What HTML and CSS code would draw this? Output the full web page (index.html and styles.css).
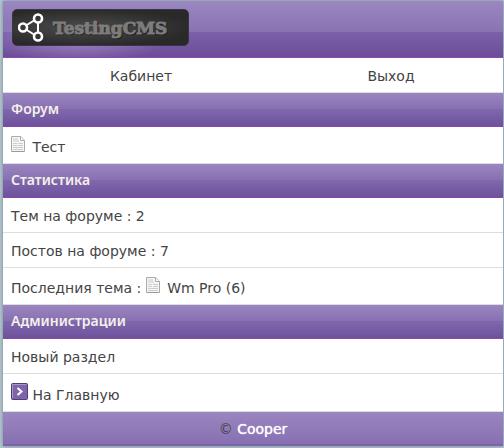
FILE: index.html
```
<!DOCTYPE html>
<html lang="ru">
<head>
  <meta charset="UTF-8">
  <meta name="viewport" content="width=device-width, initial-scale=1.0">
  <title>TestingCMS</title>
  <link rel="stylesheet" href="styles.css">
</head>
<body>
  <svg class="symbols" aria-hidden="true">
    <symbol id="doc" viewBox="0 0 14 16">
      <path d="M.5.5h9.2l3.8 3.8v11.2H.5z" fill="#f6f6f6" stroke="#aaa"/>
      <path d="M9.5.8v3.7h3.8" fill="#fff" stroke="#aaa"/>
      <path d="M2 3h5M2 5h6M2 7.5h4M7 7.5h5M2 9.5h4M7 9.5h5M2 11.5h10M2 13.5h10" stroke="#ccc"/>
      <path d="M1 15.5h12" stroke="#999"/>
    </symbol>
  </svg>

  <div class="page">
    <header class="header">
      <a class="logo" href="#">
        <svg class="logo-icon" viewBox="0 0 28 30" aria-hidden="true">
          <path d="M8 12.5l8-5M8 16.5l8 5M20 10v9" fill="none" stroke="#fff" stroke-width="2"/>
          <g fill="none" stroke="#fff" stroke-width="2.6">
            <circle cx="5" cy="14.5" r="4"/>
            <circle cx="20" cy="5.5" r="4"/>
            <circle cx="20" cy="23.5" r="4"/>
          </g>
        </svg>
        <span class="logo-text">TestingCMS</span>
      </a>
    </header>

    <nav class="nav">
      <a href="#">Кабинет</a>
      <a href="#">Выход</a>
    </nav>

    <main>
      <h2 class="title">Форум</h2>
      <div class="row">
        <svg class="doc" aria-hidden="true"><use href="#doc"/></svg>
        <a href="#">Тест</a>
      </div>

      <h2 class="title">Статистика</h2>
      <div class="row">Тем на форуме : 2</div>
      <div class="row">Постов на форуме : 7</div>
      <div class="row">
        Последния тема :
        <svg class="doc" aria-hidden="true"><use href="#doc"/></svg>
        <a href="#">Wm Pro (6)</a>
      </div>

      <h2 class="title">Администрации</h2>
      <div class="row"><a href="#">Новый раздел</a></div>
      <div class="row">
        <svg class="arrow" viewBox="0 0 17 17" aria-hidden="true">
          <rect x=".5" y=".5" width="16" height="16" rx="1" fill="#7e64ab" stroke="#523b79"/>
          <path d="M1.5 15V1.5H15" fill="none" stroke="#a797c6"/>
          <path d="M6.5 5l4 3.5-4 3.5" fill="none" stroke="#fff" stroke-width="2"/>
        </svg>
        <a href="#">На Главную</a>
      </div>
    </main>

    <footer class="footer">© <a href="#">Cooper</a></footer>
  </div>
</body>
</html>
```
FILE: styles.css
```
body {
  margin: 0;
  padding: 1px 1px 3px 3px;
  background: #b4c6d0;
  font-family: "DejaVu Sans", Verdana, sans-serif;
  font-size: 14px;
  line-height: 18px;
  color: #444;
}
a {
  color: inherit;
  text-decoration: none;
}
.symbols {
  display: none;
}
.page {
  background: #fff;
  box-shadow: 0 0 4px #6f8590;
}
.header {
  display: flex;
  padding: 8px 9px 11px;
  border-bottom: 1px solid #9445b0;
  background:
    radial-gradient(ellipse 90px 24px at 75px 38px, rgba(190, 160, 215, 0.6), transparent),
    linear-gradient(#9a86c0, #8974b3 55%, #7b60a9 56%, #6b4e98);
}
.logo {
  display: flex;
  align-items: center;
  box-sizing: border-box;
  width: 177px;
  height: 37px;
  padding: 0 5px;
  border: 1px solid #3a3544;
  border-radius: 5px;
  background: radial-gradient(ellipse at 40% 50%, #4c4c4c, #292929 75%);
}
.logo-icon {
  width: 28px;
  height: 30px;
}
.logo-text {
  margin-left: 7px;
  font-family: "DejaVu Serif", serif;
  font-size: 17px;
  font-weight: bold;
  color: #7c7c7c;
  -webkit-text-stroke: 1px #7c7c7c;
  text-shadow: 1px 1px 1px #111;
}
.nav {
  display: flex;
  border-bottom: 1px solid #ddd;
}
.nav a {
  flex: 1;
  padding: 9px 0 7px 26px;
  text-align: center;
}
.title {
  margin: 0;
  padding: 7px 8px 8px;
  border-bottom: 1px solid #8848ab;
  background: linear-gradient(#9a86c0, #8770b2 49%, #7f67ad 50%, #6d529b);
  font-family: "Noto Sans", sans-serif;
  font-size: 14px;
  font-weight: 600;
  color: #f4f0e8;
}
.row {
  padding: 9px 8px 7px;
  border-bottom: 1px solid #ddd;
}
.doc {
  width: 14px;
  height: 16px;
  margin-right: 3px;
}
.arrow {
  width: 17px;
  height: 17px;
}
.footer {
  padding: 8px 8px 6px;
  border-bottom: 2px solid #7c63aa;
  background: linear-gradient(#9a86c0, #8770b2);
  text-align: center;
}
.footer a {
  color: #fff;
  text-shadow: 0 0 1px #fff;
}
```
